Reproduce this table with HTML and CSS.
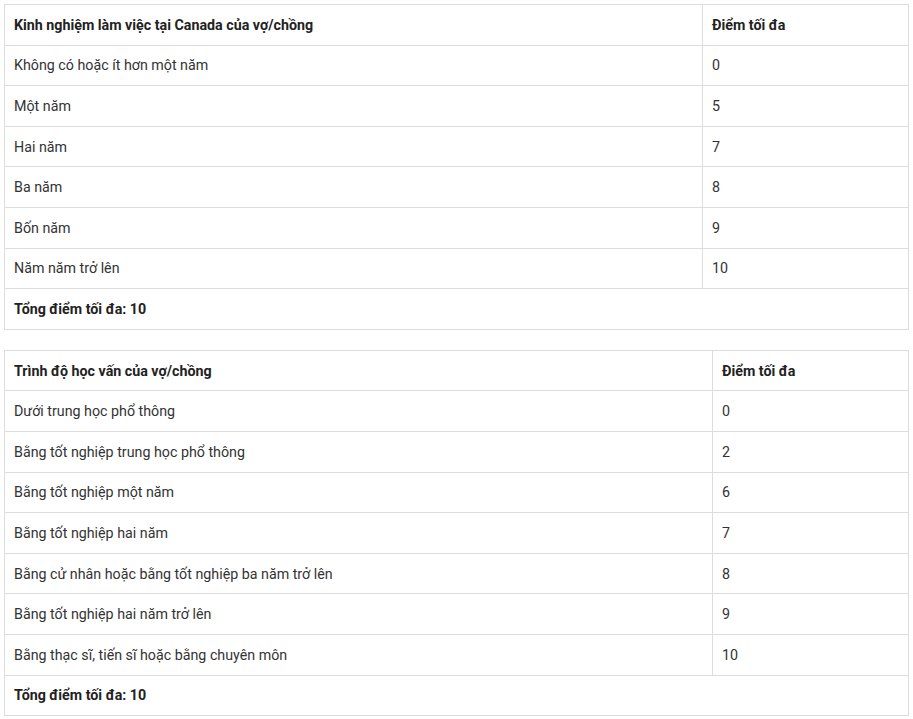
FILE: index.html
```html
<!DOCTYPE html>
<html lang="vi">
<head>
<meta charset="utf-8">
<link rel="stylesheet" href="styles.css">
</head>
<body>
<table class="points t1">
  <thead>
    <tr><th class="c1">Kinh nghiệm làm việc tại Canada của vợ/chồng</th><th class="c2">Điểm tối đa</th></tr>
  </thead>
  <tbody>
    <tr><td>Không có hoặc ít hơn một năm</td><td>0</td></tr>
    <tr><td>Một năm</td><td>5</td></tr>
    <tr><td>Hai năm</td><td>7</td></tr>
    <tr><td>Ba năm</td><td>8</td></tr>
    <tr><td>Bốn năm</td><td>9</td></tr>
    <tr><td>Năm năm trở lên</td><td>10</td></tr>
    <tr><td class="total" colspan="2">Tổng điểm tối đa: 10</td></tr>
  </tbody>
</table>
<table class="points t2">
  <thead>
    <tr><th class="c1">Trình độ học vấn của vợ/chồng</th><th class="c2">Điểm tối đa</th></tr>
  </thead>
  <tbody>
    <tr><td>Dưới trung học phổ thông</td><td>0</td></tr>
    <tr><td>Bằng tốt nghiệp trung học phổ thông</td><td>2</td></tr>
    <tr><td>Bằng tốt nghiệp một năm</td><td>6</td></tr>
    <tr><td>Bằng tốt nghiệp hai năm</td><td>7</td></tr>
    <tr><td>Bằng cử nhân hoặc bằng tốt nghiệp ba năm trở lên</td><td>8</td></tr>
    <tr><td>Bằng tốt nghiệp hai năm trở lên</td><td>9</td></tr>
    <tr><td>Bằng thạc sĩ, tiến sĩ hoặc bằng chuyên môn</td><td>10</td></tr>
    <tr><td class="total" colspan="2">Tổng điểm tối đa: 10</td></tr>
  </tbody>
</table>
</body>
</html>
```
FILE: styles.css
```css
html, body {
  margin: 0;
  background: #ffffff;
}
body {
  padding: 4px 4px 0 4px;
  font-family: Roboto, "Noto Sans", Arial, sans-serif;
  font-size: 14.25px;
  color: #333333;
}
.points {
  width: 905px;
  border-collapse: collapse;
  table-layout: fixed;
  margin-bottom: 20px;
}
.points th,
.points td {
  border: 1px solid #dddddd;
  padding: 9.8px 10px 9.8px 9px;
  line-height: 20px;
  text-align: left;
  vertical-align: middle;
}
.points th,
.points .total {
  font-weight: 700;
  color: #222222;
}
.t1 .c1 { width: 678px; }
.t2 .c1 { width: 688px; }
```
